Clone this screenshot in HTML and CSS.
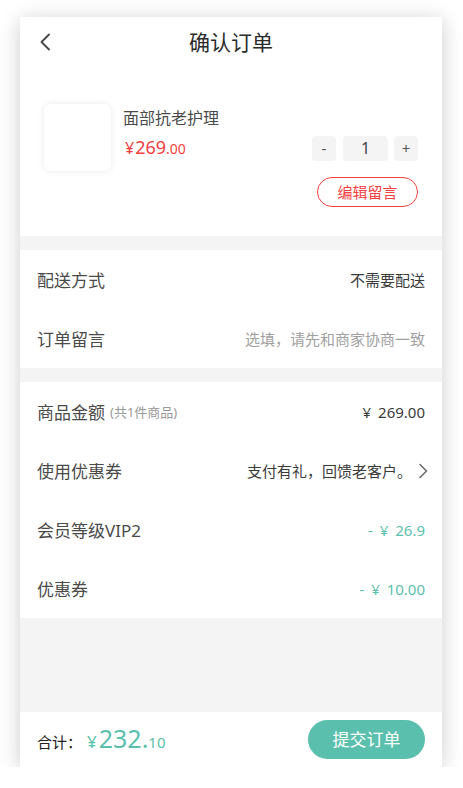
FILE: index.html
```html
<!DOCTYPE html>
<html lang="zh-CN">
<head>
<meta charset="utf-8">
<title>确认订单</title>
<link rel="stylesheet" href="styles.css">
</head>
<body>
<div class="page">
  <header class="topbar">
    <span class="back">
      <svg width="12" height="18" viewBox="0 0 12 18"><path d="M10 1.5 L2.5 9 L10 16.5" fill="none" stroke="#444" stroke-width="1.8" stroke-linecap="round" stroke-linejoin="round"/></svg>
    </span>
    <h1 class="title">确认订单</h1>
    <span></span>
  </header>

  <section class="product">
    <div class="product-row">
      <div class="thumb"></div>
      <div class="info">
        <div class="name">面部抗老护理</div>
        <div class="price-row">
          <div class="price"><span class="yen">¥</span><span class="int">269</span><span class="dec">.00</span></div>
          <div class="stepper">
            <span class="step-btn">-</span>
            <span class="step-num">1</span>
            <span class="step-btn">+</span>
          </div>
        </div>
      </div>
    </div>
    <div class="actions">
      <button class="note-btn">编辑留言</button>
    </div>
  </section>

  <section class="group">
    <div class="row"><span class="label">配送方式</span><span class="value">不需要配送</span></div>
    <div class="row"><span class="label">订单留言</span><span class="value muted">选填，请先和商家协商一致</span></div>
  </section>

  <section class="group">
    <div class="row"><span class="label">商品金额<span class="sub">(共1件商品)</span></span><span class="value money">¥ 269.00</span></div>
    <div class="row"><span class="label">使用优惠券</span><span class="value link">支付有礼，回馈老客户。<svg class="chev" width="10" height="16" viewBox="0 0 10 16"><path d="M2 1.5 L8.5 8 L2 14.5" fill="none" stroke="#666" stroke-width="1.5" stroke-linecap="round" stroke-linejoin="round"/></svg></span></div>
    <div class="row"><span class="label">会员等级VIP2</span><span class="value green money">- ¥ 26.9</span></div>
    <div class="row"><span class="label">优惠券</span><span class="value green money">- ¥ 10.00</span></div>
  </section>

  <div class="spacer"></div>

  <footer class="footer">
    <div class="total"><span class="total-label">合计：</span><span class="t-yen">¥</span><span class="t-int">232.</span><span class="t-dec">10</span></div>
    <button class="submit">提交订单</button>
  </footer>
</div>
</body>
</html>
```

FILE: styles.css
```css
* { box-sizing: border-box; }
html, body { margin: 0; padding: 0; background: #fff; }
body {
  font-family: "Noto Sans", "Noto Sans CJK SC", sans-serif;
  color: #333;
}
.page {
  width: 422px;
  height: 750px;
  margin: 17px 0 0 20px;
  background: #f4f4f4;
  display: flex;
  flex-direction: column;
  box-shadow: 0 3px 20px rgba(0,0,0,0.2);
}
.topbar {
  height: 50px;
  background: #fff;
  display: grid;
  grid-template-columns: 1fr auto 1fr;
  align-items: center;
  padding: 0 19px;
}
.back { display: flex; align-items: center; }
.title {
  margin: 0;
  font-size: 21px;
  font-weight: 400;
  color: #2a2a2a;
  line-height: 1;
}
.product {
  background: #fff;
  padding: 37px 24px 29px 24px;
  margin-bottom: 14px;
}
.product-row { display: flex; }
.thumb {
  width: 67px;
  height: 67px;
  border-radius: 7px;
  background: #fff;
  box-shadow: 0 0 7px rgba(0,0,0,0.09);
  flex: none;
}
.info {
  flex: 1;
  margin-left: 12px;
  padding-top: 3px;
}
.name {
  font-size: 16px;
  line-height: 22px;
  color: #4a4a4a;
}
.price-row {
  display: flex;
  justify-content: space-between;
  align-items: center;
  margin-top: 6px;
}
.price { color: #f2403f; line-height: 25px; padding-left: 2px; }
.yen { font-size: 16px; margin-right: 1px; }
.int { font-size: 18px; }
.dec { font-size: 14px; }
.stepper { display: flex; gap: 6px; }
.step-btn, .step-num {
  height: 25px;
  background: #f4f4f4;
  border-radius: 4px;
  display: flex;
  align-items: center;
  justify-content: center;
  color: #555;
  font-size: 15px;
}
.step-btn { width: 24px; }
.step-num { width: 45px; color: #444; font-size: 16px; margin-left: 1px; }
.actions {
  display: flex;
  justify-content: flex-end;
  margin-top: 6px;
}
.note-btn {
  width: 101px;
  height: 30px;
  border: 1px solid #f2403f;
  border-radius: 15px;
  background: #fff;
  color: #f2403f;
  font-family: inherit;
  font-size: 15px;
  padding: 0;
  line-height: 1;
}
.group {
  background: #fff;
  margin-bottom: 14px;
}
.group + .group { margin-bottom: 0; }
.row {
  height: 59px;
  display: flex;
  align-items: center;
  justify-content: space-between;
  padding: 0 17px;
}
.label { font-size: 17px; color: #4a4a4a; display: flex; align-items: center; }
.sub { font-size: 13px; color: #999; margin-left: 5px; }
.value { font-size: 15px; color: #3a3a3a; }
.value.money { word-spacing: 3px; }
.value.muted { color: #a0a0a0; }
.value.link { display: flex; align-items: center; }
.chev { margin-left: 6px; margin-right: -3px; }
.value.green { color: #5bbfad; }
.spacer { flex: 1; }
.footer {
  height: 55px;
  background: #fff;
  display: flex;
  align-items: center;
  justify-content: space-between;
  padding: 0 17px;
}
.total { display: flex; align-items: baseline; }
.total-label { font-size: 15px; color: #222; margin-right: 5px; }
.t-yen { font-size: 17px; color: #5bbfad; margin-right: 2px; }
.t-int { font-size: 25px; color: #5bbfad; line-height: 1; }
.t-dec { font-size: 15px; color: #5bbfad; }
.submit {
  width: 117px;
  height: 39px;
  border: none;
  border-radius: 20px;
  background: #5bbfad;
  color: #fff;
  font-family: inherit;
  font-size: 17px;
  padding: 0;
  line-height: 1;
}
```
